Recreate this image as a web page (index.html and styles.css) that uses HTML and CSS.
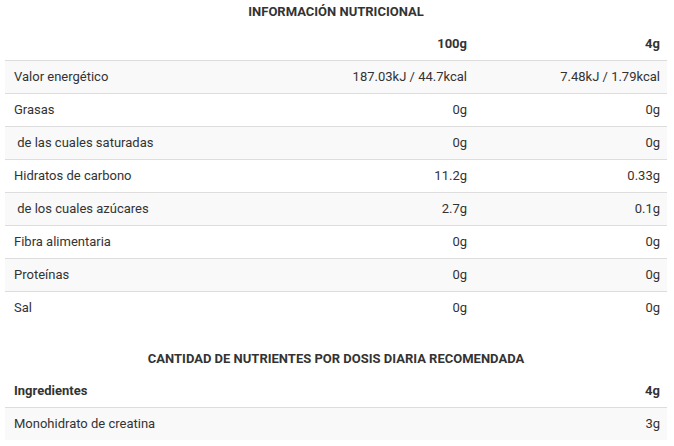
FILE: index.html
```html
<!DOCTYPE html>
<html lang="es">
<head>
  <meta charset="UTF-8" />
  <title>Información nutricional</title>
  <link rel="stylesheet" href="styles.css">
</head>
<body>
  <div class="nutri">
    <h3 class="nutri-title">Información nutricional</h3>
    <table class="nutri-table">
      <thead>
        <tr>
          <th></th>
          <th class="num">100g</th>
          <th class="num">4g</th>
        </tr>
      </thead>
      <tbody>
        <tr><td>Valor energético</td><td class="num">187.03kJ / 44.7kcal</td><td class="num">7.48kJ / 1.79kcal</td></tr>
        <tr><td>Grasas</td><td class="num">0g</td><td class="num">0g</td></tr>
        <tr><td>&nbsp;de las cuales saturadas</td><td class="num">0g</td><td class="num">0g</td></tr>
        <tr><td>Hidratos de carbono</td><td class="num">11.2g</td><td class="num">0.33g</td></tr>
        <tr><td>&nbsp;de los cuales azúcares</td><td class="num">2.7g</td><td class="num">0.1g</td></tr>
        <tr><td>Fibra alimentaria</td><td class="num">0g</td><td class="num">0g</td></tr>
        <tr><td>Proteínas</td><td class="num">0g</td><td class="num">0g</td></tr>
        <tr><td>Sal</td><td class="num">0g</td><td class="num">0g</td></tr>
      </tbody>
    </table>

    <h3 class="nutri-title second">Cantidad de nutrientes por dosis diaria recomendada</h3>
    <table class="nutri-table">
      <thead>
        <tr>
          <th>Ingredientes</th>
          <th class="num">4g</th>
        </tr>
      </thead>
      <tbody>
        <tr><td>Monohidrato de creatina</td><td class="num">3g</td></tr>
      </tbody>
    </table>
  </div>
</body>
</html>
```

FILE: styles.css
```css
body {
  margin: 0;
  padding: 0;
  font-family: Roboto, 'Liberation Sans', sans-serif;
  font-size: 13px;
  color: #333;
  background: #fff;
}

.nutri {
  padding: 0 7px 0 5px;
}

.nutri-title {
  margin: 0;
  padding: 4px 0 0;
  height: 24px;
  font-size: 13px;
  font-weight: bold;
  text-transform: uppercase;
  text-align: center;
  line-height: 16px;
}

.nutri-title.second {
  margin-top: 23px;
}

.nutri-table {
  width: 100%;
  border-collapse: collapse;
}

.nutri-table th,
.nutri-table td {
  padding: 8px 7px 8px 9px;
  line-height: 16px;
  text-align: left;
}

.nutri-table th {
  font-weight: bold;
  border-bottom: 1px solid #ddd;
}

.nutri-table td {
  border-top: 1px solid #ddd;
}

.nutri-table thead tr:first-child th {
  border-top: 0;
}

.nutri-table tbody tr:nth-child(odd) {
  background: #f9f9f9;
}

.nutri-table .num {
  text-align: right;
  width: 177px;
}
```
